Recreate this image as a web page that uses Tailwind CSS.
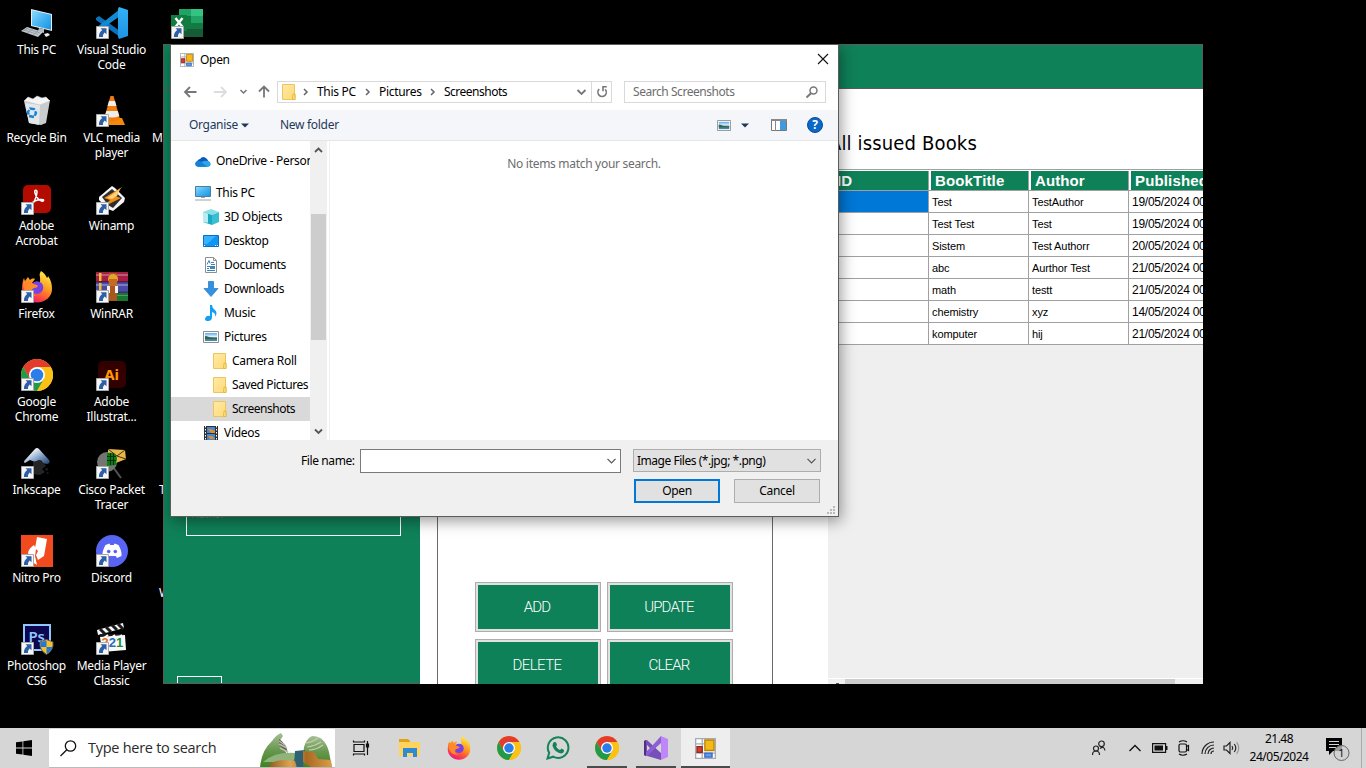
<!DOCTYPE html>
<html lang="en">
<head>
<meta charset="utf-8">
<title>Desktop</title>
<script src="https://cdn.jsdelivr.net/npm/@tailwindcss/browser@4"></script>
</head>
<body class="relative h-[768px] w-[1366px] overflow-hidden bg-black font-['Noto_Sans','Open_Sans',sans-serif] text-[12px]">
<svg class="absolute h-0 w-0" aria-hidden="true">
<defs>
<linearGradient id="scr" x1="0" y1="0" x2="1" y2="1"><stop offset="0" stop-color="#8fdcfb"/><stop offset=".5" stop-color="#45b4f3"/><stop offset="1" stop-color="#1793e0"/></linearGradient>
<linearGradient id="ffg" x1=".8" y1="0" x2=".3" y2="1"><stop offset="0" stop-color="#fff44f"/><stop offset=".45" stop-color="#ff9a20"/><stop offset=".75" stop-color="#ff4a3d"/><stop offset="1" stop-color="#e31587"/></linearGradient>
<linearGradient id="fold" x1="0" y1="0" x2="1" y2="1"><stop offset="0" stop-color="#ffeaa6"/><stop offset="1" stop-color="#ffd976"/></linearGradient>
<linearGradient id="pic" x1="0" y1="0" x2="0" y2="1"><stop offset="0" stop-color="#5ba8ec"/><stop offset=".45" stop-color="#e3f2fb"/><stop offset=".6" stop-color="#3d7466"/><stop offset="1" stop-color="#4b8fbd"/></linearGradient>
<linearGradient id="ink" x1="0" y1="0" x2="1" y2="1"><stop offset=".2" stop-color="#fff"/><stop offset=".6" stop-color="#7d9dc4"/><stop offset="1" stop-color="#1d3c6b"/></linearGradient>
<linearGradient id="vsc" x1="0" y1="0" x2="0" y2="1"><stop offset="0" stop-color="#33b1f5"/><stop offset="1" stop-color="#1e93e4"/></linearGradient>
<linearGradient id="leaf" x1="0" y1="0" x2="0" y2="1"><stop offset="0" stop-color="#a7be94"/><stop offset=".5" stop-color="#66974e"/><stop offset="1" stop-color="#3f8020"/></linearGradient>
<linearGradient id="gold" x1="0" y1="0" x2="1" y2="0"><stop offset="0" stop-color="#8e5a1c"/><stop offset=".35" stop-color="#e0a353"/><stop offset=".6" stop-color="#a86a22"/><stop offset="1" stop-color="#dc9c48"/></linearGradient>
<symbol id="short" viewBox="0 0 13 13"><path fill="#f6f6f6" stroke="#a8a8a8" d="M.5.5h12v12H.5z"/><path fill="#2c5fa5" d="M4.500 2.200h6v6L8.700 6.500C7.400 7.600 6.800 9 7 11H3C2.600 8.500 3.800 6 6.200 4z"/></symbol>
<symbol id="chrome" viewBox="0 0 32 32"><circle cx="16" cy="16" r="16" fill="#fbc116"/><path fill="#e33b2e" d="M2.150 8A16 16 0 0 1 29.860 8H16L9 20z"/><path fill="#229a4a" d="M2.150 8A16 16 0 0 0 16 32L23 20 9.100 20z"/><path fill="#fbc116" d="M16 8h13.860A16 16 0 0 1 16 32l7-12z"/><circle cx="16" cy="16" r="8" fill="#fff"/><circle cx="16" cy="16" r="6.300" fill="#2b7de9"/></symbol>
<symbol id="firefox" viewBox="0 0 32 32"><path fill="url(#ffg)" d="M20 0c3 2 5 4.500 6 7 1-1 1-2 1-2 3 4 4 8 4 13 0 8-7 13.500-15 13.500S1 26 1 18c0-5 1-9 2-11l1 3 3-4 2 3c1-1 3-2 5-1l-3 4 5 3c4-1 3-7 3-9-1-3 0-4 1-6z"/><circle cx="16" cy="16.500" r="6.300" fill="#7542e5"/><path fill="#ff8a2a" d="M2 11c3-2 8 0 9 1 2 2 5 1 6 3-2 3-5 1-6 4-1 4 2 5 5 5-8 3-14-3-14-13z"/></symbol>
<symbol id="forms" viewBox="0 0 16 16"><path fill="#fff" stroke="#a5aab5" d="M.5.500h15v15H.5z"/><path stroke="#a5aab5" d="M5.500 0v16M0 4.500h7M0 11.500h16"/><path fill="#f5ba18" stroke="#b98208" d="M7.500 1.500h7v8h-7z"/><path fill="#d43d28" stroke="#96281d" d="M1.500 6.500h4v4.500h-4z"/><path fill="#5b9bf2" stroke="#3b68bf" d="M7.500 11.500h5.500v3H7.500z"/></symbol>
<symbol id="folder" viewBox="0 0 14 16"><path fill="url(#fold)" stroke="#ecc65c" d="M.5.500h12V10h.5v5.500H.5z"/><path fill="#ffe08a" stroke="#e4b93f" d="M11 10h2v5.500h-2.500z"/></symbol>
<symbol id="pict" viewBox="0 0 16 12"><path fill="#fff" stroke="#8d8d8d" d="M.5.500h15v11H.5z"/><path fill="url(#pic)" d="M2 2h12v8H2z"/><path fill="#2e6657" d="M2 5c3 0 6 3 12 2v1H2z"/></symbol>
</defs>
</svg>

<!-- Desktop icons -->
<main class="absolute top-0 -left-px grid auto-rows-[88px] grid-cols-[75px_75px_75px] text-center leading-[15px] tracking-[-0.27px] text-white">
  <div class="flex flex-col items-center pt-[7px]"><svg class="h-8 w-8 shrink-0" viewBox="0 0 32 32"><path fill="#e8eef3" d="M10 2l21 5v17l-21-5z"/><path fill="url(#scr)" d="M11 3.200l19 4.600v15l-19-4.600z"/><path fill="#c3c9cf" d="M0 24l6-4 16 5-5 5z"/><path stroke="#8f979e" stroke-width=".8" d="M3 23l14 4.500M5 21.500l14 4.500M1.500 24.500L8 20.500M6 26l6-4M12 28l5-4"/><path fill="#b4bbc2" d="M18 21l5 1v4l-6-2z"/><path fill="#eee" d="M23 27l4-1 2 2-4 2z"/></svg><span class="mt-[3px]">This PC</span></div>
  <div class="flex flex-col items-center pt-[7px]"><div class="relative h-8 w-8 shrink-0"><svg class="h-8 w-8" viewBox="0 0 32 32"><path fill="#0b72ba" d="M0 11l3-2 21 15v6L0 13z"/><path fill="#1389d2" d="M0 21l24-19v7L3 24l-3-1z"/><path fill="url(#vsc)" d="M23 0l9 3v26l-9 3-1-2V2z"/></svg><svg class="absolute bottom-0 left-0 h-[13px] w-[13px]"><use href="#short"/></svg></div><span class="mt-[3px]">Visual Studio<br>Code</span></div>
  <div class="flex flex-col items-center pt-[7px]"><div class="relative h-8 w-8 shrink-0"><svg class="h-8 w-8" viewBox="0 0 32 32"><path fill="#21a366" d="M8 2h12v9H8z"/><path fill="#33c481" d="M20 2h12v7H20z"/><path fill="#107c41" d="M8 9h24v14H8z"/><path fill="#21a366" d="M20 9h12v7H20z"/><path fill="#185c37" d="M8 22h24v8H8z"/><path fill="#107c41" d="M0 8h16v16H0z"/><path stroke="#fff" stroke-width="2.400" d="M4.500 11l7 9M11.500 11l-7 9"/></svg><svg class="absolute bottom-0 left-0 h-[13px] w-[13px]"><use href="#short"/></svg></div></div>

  <div class="flex flex-col items-center pt-[7px]"><svg class="h-8 w-8 shrink-0" viewBox="0 0 32 32"><path fill="#c9cccf" d="M3 6l26-1-4 23-5 2-12-2z"/><path fill="#e4e7e9" d="M4 8l15 2-1 20-10-2z"/><path fill="#f5f5f5" stroke="#c2c6c9" stroke-width=".6" d="M3 6l4-4 5 2 4-3 5 2 4-1 4 4-10 4z"/><path fill="none" stroke="#1183d8" stroke-width="2.400" stroke-dasharray="5 1.500" d="M9 13.500l4 .5 2 4-2 4-5-1-1-4z"/></svg><span class="mt-[3px]">Recycle Bin</span></div>
  <div class="flex flex-col items-center pt-[7px]"><div class="relative h-8 w-8 shrink-0"><svg class="h-8 w-8" viewBox="0 0 32 32"><path fill="#f58a0a" d="M6 23h20l3 7H4z"/><path fill="#f47b0b" d="M14.500 1h3L24 24q-8 5-16 0z"/><path fill="#eee" d="M13 6h6l1.500 5h-9zM10.300 16h11.500l1.500 5q-7 3-14.400 0z"/></svg><svg class="absolute bottom-0 left-0 h-[13px] w-[13px]"><use href="#short"/></svg></div><span class="mt-[3px]">VLC media<br>player</span></div>
  <div class="pt-[42px] pl-[3px] text-left">M</div>

  <div class="flex flex-col items-center pt-[7px]"><div class="relative h-8 w-8 shrink-0"><svg class="h-8 w-8" viewBox="0 0 32 32"><rect x="2" y="2" width="28" height="28" rx="5" fill="#b30b00"/><path fill="none" stroke="#fff" stroke-width="1.500" d="M10 21c2 2 6-8 6-12 0-3-3-2-2 1 1 5 6 9 8 8 3-2-6-3-12 3z"/></svg><svg class="absolute bottom-0 left-0 h-[13px] w-[13px]"><use href="#short"/></svg></div><span class="mt-[3px]">Adobe<br>Acrobat</span></div>
  <div class="flex flex-col items-center pt-[7px]"><div class="relative h-8 w-8 shrink-0"><svg class="h-8 w-8" viewBox="0 0 32 32"><path fill="#f5f5f5" d="M3 14L16 3l3 2 10 10-1 4-11 9-5-2L3 17z"/><path fill="#2d2d2d" d="M6 14L16 6l10 9-9 10-5-3z"/><path fill="#ef8d19" d="M26 4L8 15l6 2-7 7 18-9-6-2z"/><path fill="#ffd078" d="M24 6L11 15l5 1 5-3z"/></svg><svg class="absolute bottom-0 left-0 h-[13px] w-[13px]"><use href="#short"/></svg></div><span class="mt-[3px]">Winamp</span></div>
  <div></div>

  <div class="flex flex-col items-center pt-[7px]"><div class="relative h-8 w-8 shrink-0"><svg class="h-8 w-8"><use href="#firefox"/></svg><svg class="absolute bottom-0 left-0 h-[13px] w-[13px]"><use href="#short"/></svg></div><span class="mt-[3px]">Firefox</span></div>
  <div class="flex flex-col items-center pt-[7px]"><div class="relative h-8 w-8 shrink-0"><svg class="h-8 w-8" viewBox="0 0 32 32"><path fill="#a51f45" d="M0 1h32v10H0z"/><path fill="#4b4ba5" d="M0 11h32v11H0z"/><path fill="#187532" d="M0 22h32v8H0z"/><path fill="#ffffff44" d="M0 3h32v2H0zM0 13h32v2H0zM0 24h32v1H0z"/><path fill="#00000055" d="M0 10h32v1.500H0zM0 20.500h32V22H0z"/><path fill="#f0c030" d="M3 2h2.500v8H3zM3 12h2.500v9H3z"/><path fill="#a8581c" d="M13 2h8v28h-8z"/><circle cx="17" cy="8" r="5" fill="#e4a52d"/><path fill="#c56a22" d="M13 8h8v7h-8z"/><path fill="#f4f4f4" d="M11 15h3v7h-3zM19 15h3v7h-3z"/></svg><svg class="absolute bottom-0 left-0 h-[13px] w-[13px]"><use href="#short"/></svg></div><span class="mt-[3px]">WinRAR</span></div>
  <div></div>

  <div class="flex flex-col items-center pt-[7px]"><div class="relative h-8 w-8 shrink-0"><svg class="h-8 w-8"><use href="#chrome"/></svg><svg class="absolute bottom-0 left-0 h-[13px] w-[13px]"><use href="#short"/></svg></div><span class="mt-[3px]">Google<br>Chrome</span></div>
  <div class="flex flex-col items-center pt-[7px]"><div class="relative h-8 w-8 shrink-0"><div class="mx-auto flex h-[31px] w-7 items-center"><div class="flex h-[27px] w-7 items-center justify-center rounded-[5px] bg-[#330000] text-[15px] font-bold text-[#ff9a00]">Ai</div></div><svg class="absolute bottom-0 left-0 h-[13px] w-[13px]"><use href="#short"/></svg></div><span class="mt-[3px]">Adobe<br>Illustrat...</span></div>
  <div></div>

  <div class="flex flex-col items-center pt-[7px]"><div class="relative h-8 w-8 shrink-0"><svg class="h-8 w-8" viewBox="0 0 32 32"><path fill="url(#ink)" d="M14 2q2-2 4 0l10 11q2 3-2 4l-5-1-3-3-4 2-5-2-5 3q-2-1 0-3z"/><path fill="#242424" d="M12 15l8-2 5 6-4 3 3 3-5 3-7-1z"/><path fill="#1b2942" d="M24 22l3-1-1 3zM26 25l2 1-2 1z"/></svg><svg class="absolute bottom-0 left-0 h-[13px] w-[13px]"><use href="#short"/></svg></div><span class="mt-[3px]">Inkscape</span></div>
  <div class="flex flex-col items-center pt-[7px]"><div class="relative h-8 w-8 shrink-0"><svg class="h-8 w-8" viewBox="0 0 32 32"><path stroke="#555" stroke-width="2" d="M17 20l8 11"/><circle cx="11" cy="15" r="10" fill="#737573"/><path fill="#e8b74d" d="M12 2l17 1 1 9-10 4-8-4z"/><path fill="none" stroke="#4b310e" d="M12 2l9 7 8-6M21 9l9 3"/><path fill="#087d15" d="M11 6q9-1 10 5l-1 7-9 1z"/><path stroke="#052f0a" d="M11 9.500h9M11 13.500h9M14.500 6v12M17.500 6v12"/></svg><svg class="absolute bottom-0 left-0 h-[13px] w-[13px]"><use href="#short"/></svg></div><span class="mt-[3px]">Cisco Packet<br>Tracer</span></div>
  <div class="pt-[42px] pl-[10px] text-left">T</div>

  <div class="flex flex-col items-center pt-[7px]"><div class="relative h-8 w-8 shrink-0"><svg class="h-8 w-8" viewBox="0 0 32 32"><path fill="#f04a1e" d="M0 0h32v32H0z"/><path fill="#fff" d="M16 2l10 2-3 17-6 4-2-5 2-4-3-3 1-5zM7 18q1-5 6-8l2 4-1 7 2 9q-4-2-6-5z"/></svg><svg class="absolute bottom-0 left-0 h-[13px] w-[13px]"><use href="#short"/></svg></div><span class="mt-[3px]">Nitro Pro</span></div>
  <div class="flex flex-col items-center pt-[7px]"><div class="relative h-8 w-8 shrink-0"><svg class="h-8 w-8" viewBox="0 0 32 32"><circle cx="16" cy="16" r="16" fill="#5865f2"/><path fill="#fff" d="M9.500 10l4-1.500.7 1.500h3.600l.7-1.500 4 1.500c2 3.500 3.500 7.500 3 11l-4.500 2-1.200-2h-7.600l-1.200 2-4.500-2c-.5-3.500 1-7.500 3-11z"/><circle cx="12.700" cy="16.500" r="1.800" fill="#5865f2"/><circle cx="19.300" cy="16.500" r="1.800" fill="#5865f2"/></svg><svg class="absolute bottom-0 left-0 h-[13px] w-[13px]"><use href="#short"/></svg></div><span class="mt-[3px]">Discord</span></div>
  <div class="pt-[57px] pl-[10px] text-left">W</div>

  <div class="flex flex-col items-center pt-[7px]"><div class="relative h-8 w-8 shrink-0"><div class="mx-auto mt-[1px] flex h-[27px] w-7 items-center justify-center border-2 border-[#8dc7fb] bg-[#0c0750] pb-[2px] text-[15px] font-semibold text-[#8dc7fb]">Ps</div><svg class="absolute bottom-0 left-0 h-[13px] w-[13px]"><use href="#short"/></svg><svg class="absolute -right-px bottom-0 h-[16px] w-[15px]" viewBox="0 0 15 16"><path fill="#f9bf2b" stroke="#5a5a5a" d="M7.500.5L14 3q1 8-6.500 12.500Q0 11 1 3z"/><path fill="#2278d4" d="M7.500 1.500v6.500H1.600L1.500 3.500zM7.500 8h5.900q-1 4-5.900 6.500z"/></svg></div><span class="mt-[3px]">Photoshop<br>CS6</span></div>
  <div class="flex flex-col items-center pt-[7px]"><div class="relative h-8 w-8 shrink-0"><svg class="h-8 w-8" viewBox="0 0 32 32"><path fill="#f5f5f5" d="M1 7L27 0l1 5L2 12z"/><path stroke="#1b1b1b" stroke-width="3" d="M4 6l5 5M10 4l5 5M16 2l5 5M22 1l5 5"/><path fill="#1b1b1b" d="M4 11h24v4H4z"/><path stroke="#fff" stroke-width="2" d="M8 15l4-3M15 15l4-3M22 15l4-3"/><path fill="#fafafa" d="M4 14l25-2 1 15-24 2z"/></svg><span class="absolute top-[12px] left-[6px] font-['Liberation_Sans',sans-serif] text-[13px] font-bold tracking-normal"><b class="text-[#e86e28]">3</b><b class="text-[#266bc1]">2</b><b class="text-[#199038]">1</b></span><svg class="absolute bottom-0 left-0 h-[13px] w-[13px]"><use href="#short"/></svg></div><span class="mt-[3px]">Media Player<br>Classic</span></div>
</main>

<!-- Library application window -->
<section class="absolute top-[44px] left-[163px] flex h-[640px] w-[1040px] flex-col overflow-hidden border-t border-l border-[#5c5c5c] bg-white">
  <header class="h-[44px] shrink-0 border-r border-b border-[#5c5c5c] bg-[#0f8159]"></header>
  <div class="flex min-h-0 flex-1">
    <aside class="flex w-[256px] shrink-0 flex-col justify-between border-b border-[#5c5c5c] bg-[#0f8159] pl-[13px]">
      <div class="mt-[406px] ml-[9px] h-[41px] w-[215px] border border-white pt-[11px] pl-[5px] text-[10px] leading-[15px] text-[#5b9a82]">Author</div>
      <div class="h-[7px] w-[45px] border border-b-0 border-white"></div>
    </aside>
    <div class="w-[408px] shrink-0 pl-[17px]">
      <div class="h-full w-[336px] border-x border-[#6a6a6a] pt-[493px] pl-[37px]">
        <div class="grid grid-cols-[126px_126px] grid-rows-[50px_50px] gap-x-[6px] gap-y-[7px] font-['Roboto',sans-serif] text-[15px] font-light tracking-[-0.85px] text-white">
          <button class="border border-[#adadad] bg-[#e1e1e1] p-[2px]"><span class="flex h-full items-center justify-center bg-[#0f8159] pr-[2px]">ADD</span></button>
          <button class="border border-[#adadad] bg-[#e1e1e1] p-[2px]"><span class="flex h-full items-center justify-center bg-[#0f8159] pr-[2px]">UPDATE</span></button>
          <button class="border border-[#adadad] bg-[#e1e1e1] p-[2px]"><span class="flex h-full items-center justify-center bg-[#0f8159] pt-[2px] pr-[2px] tracking-[-0.6px]">DELETE</span></button>
          <button class="border border-[#adadad] bg-[#e1e1e1] p-[2px]"><span class="flex h-full items-center justify-center bg-[#0f8159] pt-[2px] pr-[2px]">CLEAR</span></button>
        </div>
      </div>
    </div>
    <div class="flex min-w-0 flex-1 flex-col bg-[#efefef]">
      <div class="h-[80px] shrink-0 bg-white pt-[41px] pl-[1px] font-['DejaVu_Sans_Condensed','DejaVu_Sans',sans-serif] text-[20px] leading-[26px] tracking-[0.15px] text-black">All issued Books</div>
      <div class="grid shrink-0 auto-rows-[22px] grid-cols-[101px_100px_100px_100px] grid-rows-[21px] border-t border-[#a0a0a0] bg-white font-['Liberation_Sans',sans-serif] text-[11px] tracking-[-0.1px] text-black [&>*]:overflow-hidden [&>*]:border-r [&>*]:border-b [&>*]:border-[#a0a0a0] [&>*]:pl-[3px] [&>*]:leading-[22px] [&>*]:whitespace-nowrap">
        <div class="mt-px bg-[#0f8159] text-[15px] font-bold tracking-[0.15px] text-white"><span class="block pl-[6px] leading-[20px]">ID</span></div>
        <div class="mt-px bg-[#0f8159] text-[15px] font-bold tracking-[0.15px] text-white"><span class="-ml-[3px] block border-l-2 border-white pl-[4px] leading-[20px]">BookTitle</span></div>
        <div class="mt-px bg-[#0f8159] text-[15px] font-bold tracking-[0.1px] text-white"><span class="-ml-[3px] block border-l-2 border-white pl-[4px] leading-[20px]">Author</span></div>
        <div class="mt-px bg-[#0f8159] text-[15px] font-bold tracking-[0.15px] text-white"><span class="-ml-[3px] block border-l-2 border-white pl-[4px] leading-[20px]">Published</span></div>
        <div class="bg-[#0078d7]"></div><div>Test</div><div>TestAuthor</div><div class="text-[12px] tracking-[-0.25px]">19/05/2024 00:00</div>
        <div></div><div>Test Test</div><div>Test</div><div class="text-[12px] tracking-[-0.25px]">19/05/2024 00:00</div>
        <div></div><div>Sistem</div><div>Test Authorr</div><div class="text-[12px] tracking-[-0.25px]">20/05/2024 00:00</div>
        <div></div><div>abc</div><div>Aurthor Test</div><div class="text-[12px] tracking-[-0.25px]">21/05/2024 00:00</div>
        <div></div><div>math</div><div>testt</div><div class="text-[12px] tracking-[-0.25px]">21/05/2024 00:00</div>
        <div></div><div>chemistry</div><div>xyz</div><div class="text-[12px] tracking-[-0.25px]">14/05/2024 00:00</div>
        <div></div><div>komputer</div><div>hij</div><div class="text-[12px] tracking-[-0.25px]">21/05/2024 00:00</div>
      </div>
      <div class="mt-auto flex h-[6px] shrink-0 items-end border-t border-white pl-[8px]"><i class="h-px w-[3px] bg-[#555]"></i><div class="ml-[6px] h-full w-[330px] bg-[#cdcdcd]"></div></div>
    </div>
  </div>
</section>

<!-- File open dialog -->
<section class="absolute top-[44px] left-[170px] flex h-[473px] w-[669px] flex-col border border-[#5c5c5c] bg-white tracking-[-0.3px] text-black shadow-[2px_4px_14px_rgba(0,0,0,0.4)]">
  <header class="flex h-[30px] shrink-0 items-center pr-[9px] pl-[9px]">
    <svg class="mb-px h-[14px] w-[14px]"><use href="#forms"/></svg><span class="ml-[6px]">Open</span>
    <svg class="mb-[2px] ml-auto h-3 w-3" viewBox="0 0 12 12"><path stroke="#111" stroke-width="1.100" d="M1 1l10 10M11 1L1 11"/></svg>
  </header>
  <div class="flex h-[35px] shrink-0 items-center pb-px pl-[12px]">
    <svg class="h-4 w-[96px]" viewBox="0 0 96 16" fill="none"><path stroke="#777" stroke-width="1.800" d="M13.500 8H2M7 3L2 8l5 5M81 13.500V3M76 7.500l5-5 5 5"/><path stroke="#dcdcdc" stroke-width="1.800" d="M31 8h11.500M38 3l5 5-5 5"/><path stroke="#777" stroke-width="1.500" d="M57.500 6l3 3 3-3"/></svg>
    <div class="-ml-[2px] flex h-[22px] w-[335px] items-center border border-[#d9d9d9]">
      <svg class="mb-px ml-[4px] h-4 w-[14px]"><use href="#folder"/></svg>
      <svg class="ml-[7px] h-2 w-[6px]" viewBox="0 0 6 8"><path fill="none" stroke="#666" stroke-width="1.500" d="M1 1l3 3-3 3"/></svg>
      <span class="ml-[8px] w-[40px] whitespace-nowrap">This PC</span>
      <svg class="ml-[8px] h-2 w-[6px]" viewBox="0 0 6 8"><path fill="none" stroke="#666" stroke-width="1.500" d="M1 1l3 3-3 3"/></svg>
      <span class="ml-[8px] w-[44px] whitespace-nowrap">Pictures</span>
      <svg class="ml-[7px] h-2 w-[6px]" viewBox="0 0 6 8"><path fill="none" stroke="#666" stroke-width="1.500" d="M1 1l3 3-3 3"/></svg>
      <span class="ml-[8px] tracking-[-0.5px]">Screenshots</span>
      <svg class="mr-[4px] ml-auto h-2 w-[11px]" viewBox="0 0 11 8"><path fill="none" stroke="#777" stroke-width="1.800" d="M1.500 2l4 4 4-4"/></svg>
      <div class="flex h-full w-[20px] items-center justify-center border-l border-[#d9d9d9]"><svg class="h-3 w-3" viewBox="0 0 12 12"><path fill="none" stroke="#777" stroke-width="1.600" d="M3.200 3.200A4.200 4.200 0 1 0 9.200 3.400M10.800.800H7v4.500M7 3.500"/></svg></div>
    </div>
    <div class="ml-[12px] flex h-[22px] w-[202px] items-center justify-between border border-[#d9d9d9] pr-[6px] pl-[8px] tracking-[-0.45px] text-[#6d6d6d]">Search Screenshots<svg class="h-[14px] w-[14px]" viewBox="0 0 14 14"><path fill="none" stroke="#777" stroke-width="2" d="M6 8.200L1.500 12.500"/><circle cx="8.500" cy="5.500" r="3.500" fill="none" stroke="#777" stroke-width="1.500"/></svg></div>
  </div>
  <nav class="flex h-[31px] shrink-0 items-center border-b border-[#e4e6e8] bg-[#f4f6f9] pr-[15px] pl-[18px] text-[#1e395b]">
    <span class="w-[50px] whitespace-nowrap">Organise</span><svg class="ml-[2px] h-[5px] w-[8px]" viewBox="0 0 8 5"><path fill="#1e395b" d="M0 .500h8L4 4.500z"/></svg>
    <span class="ml-[31px]">New folder</span>
    <svg class="ml-auto h-[11px] w-[14px]" viewBox="0 0 16 12" preserveAspectRatio="none"><use href="#pict" width="16" height="12"/></svg>
    <svg class="ml-[10px] h-[5px] w-[8px]" viewBox="0 0 8 5"><path fill="#1e395b" d="M0 .500h8L4 4.500z"/></svg>
    <svg class="ml-[22px] h-3 w-4" viewBox="0 0 16 12"><path fill="#fff" stroke="#777" d="M.5.500h15v11H.5z"/><path fill="#888" d="M0 0h16v2H0zM4 2h1v10H4z"/><path fill="#409ae0" d="M9 2h6v9H9z"/></svg>
    <span class="ml-[20px] flex h-4 w-4 items-center justify-center rounded-full border border-[#084f9b] bg-[#0a68c9] text-[12px] font-bold text-white">?</span>
  </nav>
  <div class="flex h-[299px] shrink-0">
    <div class="h-full w-[139px] shrink-0 overflow-hidden pt-[8px] leading-[24px] whitespace-nowrap">
      <div class="flex h-6 items-center gap-[5px] pl-[24px]"><svg class="h-4 w-4 shrink-0" viewBox="0 0 16 16"><path fill="#0b5cb8" d="M2 9.500q0-3 3-3.500 3-4 7 0l2 3-7 3z"/><path fill="#2ba5e8" d="M6 9l3-1q3-1 6 1 2 4-2 5H4z"/><path fill="#1480d8" d="M0 11q1-4 5-3l7 5.500-9 .5q-3-1-3-3z"/></svg>OneDrive - Personal</div>
      <div class="mt-[8px] flex h-6 items-center gap-[5px] pl-[24px]"><svg class="h-4 w-4 shrink-0" viewBox="0 0 16 16"><path fill="url(#scr)" stroke="#4c7e9b" d="M.5 1.500h15v10H.5z"/><path stroke="#9aa5ad" d="M6 12.500h4M0 15h16"/></svg>This PC</div>
      <div class="flex h-6 items-center gap-[5px] pl-[32px]"><svg class="h-4 w-4 shrink-0" viewBox="0 0 16 16"><path fill="#8adfe8" d="M0 3l8-3 8 3-7 3z"/><path fill="#1ca8c0" d="M0 3l9 3v10l-9-3z"/><path fill="#39bfd2" d="M9 6l7-3v10l-7 3z"/><path fill="#b8eef2" d="M0 3l5 1.700v9L0 13z"/></svg>3D Objects</div>
      <div class="flex h-6 items-center gap-[5px] pl-[32px]"><svg class="h-4 w-4 shrink-0" viewBox="0 0 16 16"><path fill="#0f95f2" stroke="#0870c6" d="M.5 2.500h15v11H.5z"/><path fill="#36b2ff" d="M1 3h12L4 11H1z"/><path stroke="#fff" stroke-dasharray="1 1" d="M1 12.500h1M12 12.500h3"/></svg>Desktop</div>
      <div class="flex h-6 items-center gap-[5px] pl-[32px]"><svg class="h-4 w-4 shrink-0" viewBox="0 0 16 16"><path fill="#fff" stroke="#8e8e8e" d="M2.500.500h8l3 3v12h-11z"/><path fill="none" stroke="#8e8e8e" d="M10.500.500v3h3"/><path fill="none" stroke="#3984c8" d="M4 7.500l2-4 1 3M8 5.500h3M8 7.500h4M4 9.500h8M4 11.500h2M4 13.500h8"/><path fill="#4c8c8a" d="M7 10h5v2H7z"/></svg>Documents</div>
      <div class="flex h-6 items-center gap-[5px] pl-[32px]"><svg class="h-4 w-4 shrink-0" viewBox="0 0 16 16"><path fill="#3292e2" stroke="#2477bf" stroke-width=".7" d="M5.500.500h5v7H15l-7 8-7-8h4.500z"/></svg>Downloads</div>
      <div class="flex h-6 items-center gap-[5px] pl-[32px]"><svg class="h-4 w-4 shrink-0" viewBox="0 0 16 16"><path fill="#139ff5" d="M7 0h2q0 3 3 5 3 3 0 7 1-4-3-5v5q0 4-4 4-3 0-3-2 1-4 5-3z"/></svg>Music</div>
      <div class="flex h-6 items-center gap-[5px] pl-[32px]"><svg class="h-3 w-4 shrink-0"><use href="#pict"/></svg>Pictures</div>
      <div class="flex h-6 items-center gap-[5px] pl-[42px]"><svg class="h-4 w-[14px] shrink-0"><use href="#folder"/></svg>Camera Roll</div>
      <div class="flex h-6 items-center gap-[5px] pl-[42px] tracking-[-0.4px]"><svg class="h-4 w-[14px] shrink-0"><use href="#folder"/></svg>Saved Pictures</div>
      <div class="flex h-6 items-center gap-[5px] bg-[#d9d9d9] pl-[42px] tracking-[-0.5px]"><svg class="h-4 w-[14px] shrink-0"><use href="#folder"/></svg>Screenshots</div>
      <div class="flex h-6 items-center gap-[5px] pl-[32px]"><svg class="h-4 w-4 shrink-0" viewBox="0 0 16 16"><path fill="#303030" d="M1 1h14v15H1z"/><path stroke="#fff" stroke-dasharray="1.500 1.500" d="M2.500 1v15M13.500 1v15"/><path fill="#4288d0" d="M4 2h8v6H4zM4 9h8v7H4z"/><path fill="#dc8d36" d="M5 4h3l4 2v2H8zM5 11h4l3 3H7z"/></svg>Videos</div>
    </div>
    <div class="flex w-[17px] shrink-0 flex-col items-center bg-[#f0f0f0]">
      <svg class="mt-[5px] h-[9px] w-[9px] shrink-0" viewBox="0 0 9 9"><path fill="none" stroke="#555" stroke-width="1.800" d="M1 6l3.500-3.500L8 6"/></svg>
      <div class="mt-[59px] h-[126px] w-[15px] shrink-0 bg-[#cdcdcd]"></div>
      <svg class="mt-auto mb-[4px] h-[9px] w-[9px] shrink-0" viewBox="0 0 9 9"><path fill="none" stroke="#555" stroke-width="1.800" d="M1 2.500L4.500 6 8 2.500"/></svg>
    </div>
    <div class="ml-[2px] flex-1 border-l border-[#f0f0f0] pt-[14px] text-center leading-[18px] text-[#6d6d6d]">No items match your search.</div>
  </div>
  <footer class="relative flex flex-1 flex-col bg-[#f0f0f0] pt-[9px]">
    <div class="flex pl-[130px]">
      <span class="w-[54px] leading-[24px] tracking-[-0.4px] whitespace-nowrap">File name:</span>
      <div class="ml-[5px] flex h-6 w-[261px] items-center justify-end border border-[#7a7a7a] bg-white pr-[4px]"><svg class="h-[6px] w-[9px]" viewBox="0 0 9 6"><path fill="none" stroke="#555" stroke-width="1.200" d="M.5.800l4 4 4-4"/></svg></div>
      <div class="ml-[12px] flex h-[23px] w-[188px] items-center justify-between border border-[#adadad] bg-[#e1e1e1] pr-[4px] pl-[3px] tracking-[-0.47px]">Image Files (*.jpg; *.png)<svg class="h-[6px] w-[9px]" viewBox="0 0 9 6"><path fill="none" stroke="#555" stroke-width="1.200" d="M.5.800l4 4 4-4"/></svg></div>
    </div>
    <div class="mt-[6px] flex gap-[14px] pl-[463px]">
      <button class="h-6 w-[86px] border-2 border-[#0078d7] bg-[#e1e1e1] leading-[18px]"><span class="block h-5 leading-[19px]">Open</span></button>
      <button class="h-6 w-[86px] border border-[#adadad] bg-[#e1e1e1]"><span class="block h-[22px] leading-[21px]">Cancel</span></button>
    </div>
    <svg class="absolute right-[3px] bottom-[2px] h-2 w-2" viewBox="0 0 8 8"><path fill="#b9b9b9" d="M0 6h2v2H0zM3 6h2v2H3zM6 6h2v2H6zM3 3h2v2H3zM6 3h2v2H6zM6 0h2v2H6z"/></svg>
  </footer>
</section>

<!-- Taskbar -->
<footer class="absolute bottom-0 left-0 flex h-10 w-full bg-[#d6d6d6] text-black">
  <div class="flex w-[49px] shrink-0 items-center pl-[16px]"><svg class="h-4 w-4" viewBox="0 0 16 16"><path d="M0 2.300l6.500-.9v6.100H0zM7.300 1.300L16 0v7.500H7.300zM0 8.400h6.500v6.200L0 13.700zM7.300 8.400H16V16l-8.700-1.200z"/></svg></div>
  <div class="mt-px flex h-[39px] w-[286px] shrink-0 items-center overflow-hidden border-b border-[#bbb] bg-white pl-[11px]">
    <svg class="h-[17px] w-[17px]" viewBox="0 0 17 17" fill="none" stroke="#111" stroke-width="1.300"><circle cx="10.500" cy="6" r="5.200"/><path d="M6.800 9.700L.5 16"/></svg>
    <span class="ml-[11px] font-['Open_Sans',sans-serif] text-[14.500px] tracking-[-0.27px] whitespace-nowrap text-[#2b2b2b]">Type here to search</span>
    <svg class="mt-[5px] mr-[3px] ml-auto h-[35px] w-[72px] shrink-0" viewBox="0 0 72 35"><path fill="url(#leaf)" d="M0 35Q1 18 12 8 16 2 21 0l2 3-4 6 8 12 12 0v14z"/><path fill="#466a3f" d="M19 6q7 4 9 14l-9-8z"/><path stroke="#c5b7b3" stroke-width="1.500" d="M19 8l6 4M19 11l8 4M20 15l8 4"/><path fill="url(#leaf)" d="M44 14Q46 6 52 3q13 0 17 16l3 16H42z"/><path stroke="#c4d1ab" stroke-width="1.200" fill="none" d="M46 10q7-1 12-5M47 14q8-1 14-5M49 17q7 0 14-5"/><path fill="#8fb37a" d="M3 29q12-11 34-9l-4 9z"/><path fill="#2d6274" d="M35 18l10-1-2 18h-9z"/><path fill="url(#gold)" d="M11 30q10-5 24-2l2 7H8zM43 18l11 1 4 7 13 1 1 8H52l-9-6z"/></svg>
  </div>
  <div class="ml-px flex [&>*]:flex [&>*]:h-10 [&>*]:w-[49.300px] [&>*]:items-center [&>*]:justify-center">
    <div><svg class="h-4 w-[18px]" viewBox="0 0 18 16" fill="none" stroke="#111" stroke-width="1.200"><path d="M2 4.500h10v7H2zM1.500.500V2h11V.500M1.500 15.500V14h11v1.500M15.500 1v14"/><path fill="#111" d="M14.500 4h2v3h-2z"/></svg></div>
    <div><svg class="h-[18px] w-[22px]" viewBox="0 0 22 18"><path fill="#e2a214" d="M0 0h9l2 2v4H0z"/><path fill="#ffd35c" d="M0 3h21v14H0z"/><path fill="#2d8bd6" d="M4 9h14v9h-4v-4H8v4H4z"/></svg></div>
    <div><svg class="h-6 w-6"><use href="#firefox"/></svg></div>
    <div><svg class="h-6 w-6"><use href="#chrome"/></svg></div>
    <div><svg class="h-6 w-6" viewBox="0 0 24 24" fill="none" stroke="#16825a" stroke-width="2"><path d="M1.500 22.500l1.700-5.700a10.300 10.300 0 1 1 4 3.900z"/><path fill="#16825a" stroke="none" d="M8 6l2 .2L11 9l-1 1.500q1.500 2.500 4 3.500l1.500-1.600L18 14q.3 3-2.500 3.400Q9 17 6.500 10 6.500 7 8 6z"/></svg></div>
    <div class="relative"><svg class="h-6 w-6"><use href="#chrome"/></svg><i class="absolute bottom-0 h-[2px] w-10 bg-[#4b4b4b]"></i></div>
    <div class="relative"><svg class="h-6 w-6" viewBox="0 0 24 24"><path fill="#7650b8" d="M0 5l3-1 15 14-1 6L0 19z"/><path fill="#8b5ed1" d="M0 19l17-19v7L3 20z"/><path fill="#4e2f83" d="M0 5l2-1v16l-2-1z"/><path fill="#d6d6d6" d="M3 9l3 3-3 3zM17 8v8l-5-4z"/><path fill="#bd87f7" d="M17 0l7 3v18l-7 3z"/></svg><i class="absolute bottom-0 h-[2px] w-10 bg-[#4b4b4b]"></i></div>
    <div class="relative bg-[#eee]"><svg class="h-[21px] w-[21px]"><use href="#forms"/></svg><i class="absolute bottom-0 h-[2px] w-full bg-[#4b4b4b]"></i></div>
  </div>
  <div class="ml-auto flex items-center">
    <svg class="h-4 w-4" viewBox="0 0 16 16" fill="none" stroke="#222" stroke-width="1.200"><circle cx="10.500" cy="3.800" r="2.800"/><circle cx="5" cy="8.500" r="2.500"/><path d="M1.500 15q0-4 3.500-4t3.500 4M9 8.500q4-3 5 2"/></svg>
    <svg class="ml-[22px] h-[8px] w-[12px]" viewBox="0 0 12 8" fill="none" stroke="#111" stroke-width="1.300"><path d="M.500 7L6 1.500 11.500 7"/></svg>
    <svg class="ml-[11px] h-[10px] w-[16px]" viewBox="0 0 16 10" fill="none" stroke="#111" stroke-width="1.200"><path d="M.600.600h13v8.800H.600z"/><path fill="#111" stroke="none" d="M2.500 2.500h8.500v5H2.500zM14 3h1.500v4H14z"/></svg>
    <svg class="ml-[9px] h-4 w-[14px]" viewBox="0 0 14 16" fill="none" stroke="#111" stroke-width="1.200"><rect x="2" y="4" width="7.500" height="8" rx="1.500"/><path d="M9.500 6.500l2-1v5l-2-1M2 2q4-2.500 8 0M2 14q4 2.500 8 0"/></svg>
    <svg class="ml-[10px] h-[14px] w-[14px]" viewBox="0 0 14 14" fill="none" stroke="#222" stroke-width="1.200"><path d="M1 13A12 12 0 0 1 13 1M4 13a9 9 0 0 1 9-9M7 13a6 6 0 0 1 6-6M10 13a3 3 0 0 1 3-3"/></svg>
    <svg class="ml-[8px] h-[14px] w-[17px]" viewBox="0 0 17 14" fill="none" stroke="#222" stroke-width="1.200"><path d="M1 5h2.500L7 1.500v11L3.500 9H1zM9 5q1.500 2 0 4M11.300 3q3 4 0 8"/><path stroke="#999" d="M13.600 1.200q4.300 5.800 0 11.600"/></svg>
    <div class="ml-[8px] w-[62px] text-center leading-[18px] tracking-[-0.5px] whitespace-nowrap">21.48<br>24/05/2024</div>
    <svg class="ml-[15px] h-[26px] w-[26px]" viewBox="0 0 26 26"><path d="M1 3h16v13H8l-4 4v-4H1z"/><path stroke="#d6d6d6" d="M4 6.500h10M4 9.500h10M4 12.500h7"/><circle cx="16.500" cy="18" r="7.500" fill="#d0d0d0" fill-opacity=".75" stroke="#666"/><text x="16.500" y="22" text-anchor="middle" font-family="Noto Sans" font-size="11" fill="#111">1</text></svg>
    <i class="mr-[4px] ml-[10px] h-10 w-px bg-[#aaa]"></i>
  </div>
</footer>
</body>
</html>
